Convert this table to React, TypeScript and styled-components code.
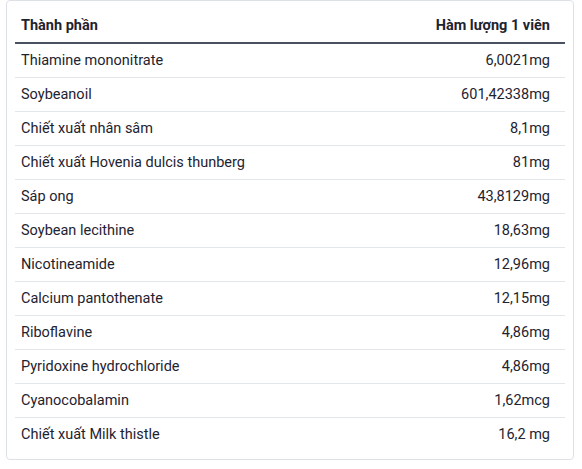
import styled, { createGlobalStyle } from 'styled-components'

const GlobalStyle = createGlobalStyle`
  body {
    margin: 0;
    background: #ffffff;
    font-family: Roboto, "Noto Sans", Arial, sans-serif;
  }
`

const rows = [
  ['Thiamine mononitrate', '6,0021mg'],
  ['Soybeanoil', '601,42338mg'],
  ['Chiết xuất nhân sâm', '8,1mg'],
  ['Chiết xuất Hovenia dulcis thunberg', '81mg'],
  ['Sáp ong', '43,8129mg'],
  ['Soybean lecithine', '18,63mg'],
  ['Nicotineamide', '12,96mg'],
  ['Calcium pantothenate', '12,15mg'],
  ['Riboflavine', '4,86mg'],
  ['Pyridoxine hydrochloride', '4,86mg'],
  ['Cyanocobalamin', '1,62mcg'],
  ['Chiết xuất Milk thistle', '16,2 mg'],
]

function App() {
  return (
    <Page>
      <GlobalStyle />
      <Card>
        <Table>
          <thead>
            <tr>
              <Th>Thành phần</Th>
              <Th $right>Hàm lượng 1 viên</Th>
            </tr>
          </thead>
          <tbody>
            {rows.map(([name, amount], i) => (
              <Row key={name} $last={i === rows.length - 1}>
                <Td>{name}</Td>
                <Td $right>{amount}</Td>
              </Row>
            ))}
          </tbody>
        </Table>
      </Card>
    </Page>
  )
}

export default App

const Page = styled.div`
  padding: 0 8px 0 6px;
`

const Card = styled.div`
  width: 550px;
  border: 1px solid #dde1e7;
  border-radius: 4px;
  padding: 8px;
  background: #fff;
`

const Table = styled.table`
  width: 100%;
  border-collapse: collapse;
  font-size: 14.5px;
  line-height: 17px;
  color: #1e2330;
`

const Th = styled.th<{ $right?: boolean }>`
  text-align: ${p => (p.$right ? 'right' : 'left')};
  font-weight: 700;
  padding: ${p => (p.$right ? '8px 15px 8px 6px' : '8px 6px')};
  border-bottom: 2px solid #4a5260;
`

const Row = styled.tr<{ $last?: boolean }>`
  border-bottom: ${p => (p.$last ? 'none' : '1px solid #e2e5ea')};
`

const Td = styled.td<{ $right?: boolean }>`
  text-align: ${p => (p.$right ? 'right' : 'left')};
  padding: ${p => (p.$right ? '8px 15px 8px 6px' : '8px 6px')};
`
